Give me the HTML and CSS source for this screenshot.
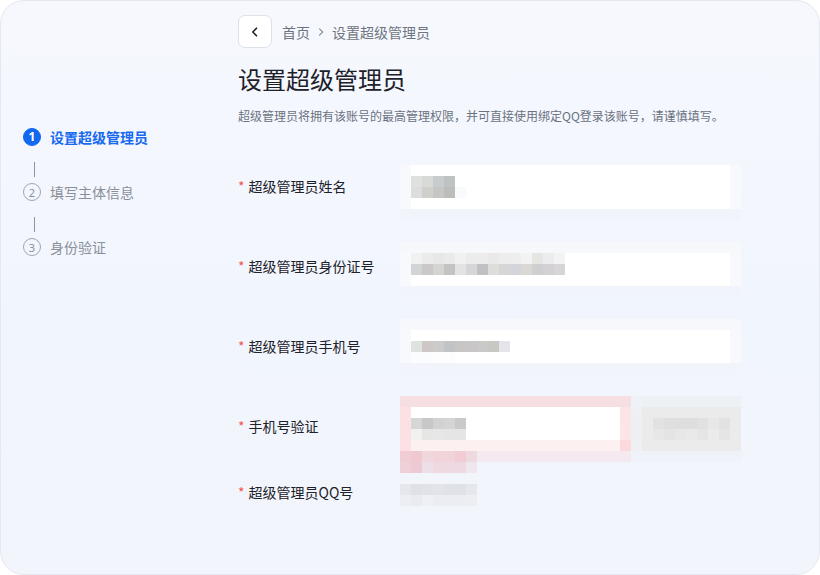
FILE: index.html
```html
<!DOCTYPE html>
<html lang="zh-CN">
<head>
<meta charset="utf-8">
<title>设置超级管理员</title>
<link rel="stylesheet" href="styles.css">
</head>
<body>
<div class="card">
  <aside class="steps">
    <div class="step active"><span class="dot">1</span><span class="step-text">设置超级管理员</span></div>
    <div class="link"></div>
    <div class="step"><span class="dot">2</span><span class="step-text">填写主体信息</span></div>
    <div class="link"></div>
    <div class="step"><span class="dot">3</span><span class="step-text">身份验证</span></div>
  </aside>
  <main class="main">
    <div class="topbar">
      <button class="back" type="button" aria-label="返回">
        <svg width="12" height="12" viewBox="0 0 12 12"><path d="M7.5 2.2 3.8 6l3.7 3.8" fill="none" stroke="#1d2129" stroke-width="1.6" stroke-linecap="round" stroke-linejoin="round"/></svg>
      </button>
      <nav class="crumbs">
        <span>首页</span>
        <svg class="sep" width="10" height="10" viewBox="0 0 10 10"><path d="M3.5 1.8 6.7 5 3.5 8.2" fill="none" stroke="#8a9099" stroke-width="1.2" stroke-linecap="round" stroke-linejoin="round"/></svg>
        <span>设置超级管理员</span>
      </nav>
    </div>
    <h1 class="title">设置超级管理员</h1>
    <p class="desc">超级管理员将拥有该账号的最高管理权限，并可直接使用绑定QQ登录该账号，请谨慎填写。</p>

    <form class="form">
      <!-- row 1 -->
      <div class="row r1">
        <label class="label"><i>*</i>超级管理员姓名</label>
        <div class="field">
          <div class="strip"><b class="c e"></b><b class="fill w"></b><b class="c e"></b></div>
          <div class="strip"><b class="c e"></b><b class="c" style="background:#dfe0df"></b><b class="c" style="background:#d8dad7"></b><b class="c" style="background:#c9cccd"></b><b class="c" style="background:#bfc2c3"></b><b class="fill w"></b><b class="c e"></b></div>
          <div class="strip"><b class="c e"></b><b class="c" style="background:#dddddd"></b><b class="c" style="background:#cfd0cc"></b><b class="c" style="background:#c6c6c4"></b><b class="c" style="background:#bcbcba"></b><b class="c" style="background:#f9fafc"></b><b class="fill w"></b><b class="c e"></b></div>
          <div class="strip"><b class="c e"></b><b class="fill w"></b><b class="c e"></b></div>
          <div class="strip faint"></div>
        </div>
      </div>

      <!-- row 2 -->
      <div class="row r2">
        <label class="label"><i>*</i>超级管理员身份证号</label>
        <div class="field">
          <div class="strip faint2"></div>
          <div class="strip"><b class="c e"></b><b class="c" style="background:#f1f1f1"></b><b class="c" style="background:#ebebeb"></b><b class="c" style="background:#e7e7e7"></b><b class="c" style="background:#e9eaeb"></b><b class="c" style="background:#f1f1f1"></b><b class="c" style="background:#ececec"></b><b class="c" style="background:#ececec"></b><b class="c" style="background:#eae8e8"></b><b class="c" style="background:#eeeded"></b><b class="c" style="background:#eeeeef"></b><b class="c" style="background:#f3f3f3"></b><b class="c" style="background:#e5e5e2"></b><b class="c" style="background:#ececee"></b><b class="c" style="background:#f3f3f3"></b><b class="fill w"></b><b class="c e"></b></div>
          <div class="strip"><b class="c e"></b><b class="c" style="background:#d2d5d6"></b><b class="c" style="background:#cac8c8"></b><b class="c" style="background:#d4d5d0"></b><b class="c" style="background:#c2c4c4"></b><b class="c" style="background:#e3e3e3"></b><b class="c" style="background:#d6d5d7"></b><b class="c" style="background:#c1c1c3"></b><b class="c" style="background:#dedddb"></b><b class="c" style="background:#d6d6d6"></b><b class="c" style="background:#d4d5da"></b><b class="c" style="background:#dad8d5"></b><b class="c" style="background:#cdd0cf"></b><b class="c" style="background:#d3d1d3"></b><b class="c" style="background:#d6d6d6"></b><b class="fill w"></b><b class="c e"></b></div>
          <div class="strip"><b class="c e"></b><b class="fill w"></b><b class="c e"></b></div>
          <div class="strip faint"></div>
        </div>
      </div>

      <!-- row 3 -->
      <div class="row r3">
        <label class="label"><i>*</i>超级管理员手机号</label>
        <div class="field">
          <div class="strip faint2"></div>
          <div class="strip"><b class="c e"></b><b class="fill w"></b><b class="c e"></b></div>
          <div class="strip"><b class="c e"></b><b class="c" style="background:#dfe3e0"></b><b class="c" style="background:#cdc8c5"></b><b class="c" style="background:#cbcbca"></b><b class="c" style="background:#c1c4c6"></b><b class="c" style="background:#c8c6c4"></b><b class="c" style="background:#c8c6c7"></b><b class="c" style="background:#c9c9ca"></b><b class="c" style="background:#c8c7c1"></b><b class="c" style="background:#e4e4ea"></b><b class="fill w"></b><b class="c e"></b></div>
          <div class="strip"><b class="c e"></b><b class="c" style="background:#fbfcfd"></b><b class="c" style="background:#fbfcfd"></b><b class="c" style="background:#fdfdfe"></b><b class="c" style="background:#fdfdfe"></b><b class="fill w"></b><b class="c e"></b></div>
          <div class="strip faint"></div>
        </div>
      </div>

      <!-- row 4 -->
      <div class="row r4">
        <label class="label"><i>*</i>手机号验证</label>
        <div class="field">
          <div class="strip"><b class="pk-w" style="background:#f5dfe3"></b><b class="c" style="background:#eef1f6"></b><b class="fill" style="background:#edf0f4"></b></div>
          <div class="strip"><b class="c" style="background:#fbe1e4"></b><b class="in w"></b><b class="c" style="background:#fce4e6"></b><b class="c" style="background:#eef0f4"></b><b class="fill btn"></b></div>
          <div class="strip"><b class="c" style="background:#fce0e3"></b><b class="c" style="background:#d6d6d6"></b><b class="c" style="background:#c9c8c9"></b><b class="c" style="background:#d2d2d2"></b><b class="c" style="background:#d4d5d6"></b><b class="c" style="background:#cacaca"></b><b class="in2 w"></b><b class="c" style="background:#fce4e7"></b><b class="c" style="background:#eeeff2"></b><b class="c btn"></b><b class="c" style="background:#e2e2e2"></b><b class="c" style="background:#dfdfdf"></b><b class="c" style="background:#dedede"></b><b class="c" style="background:#dedede"></b><b class="c" style="background:#e1e1e1"></b><b class="c" style="background:#e7e7e7"></b><b class="c" style="background:#e2e2e2"></b><b class="fill btn"></b></div>
          <div class="strip"><b class="c" style="background:#fce1e4"></b><b class="c" style="background:#f1f1f0"></b><b class="c" style="background:#e6e6e4"></b><b class="c" style="background:#e7e7e7"></b><b class="c" style="background:#e5e5e5"></b><b class="c" style="background:#e5e5e5"></b><b class="in2 w"></b><b class="c" style="background:#fce4e7"></b><b class="c" style="background:#eeeff2"></b><b class="c btn"></b><b class="c" style="background:#e7e7e7"></b><b class="c" style="background:#e4e4e4"></b><b class="c" style="background:#e7e7e7"></b><b class="c" style="background:#e9e9e9"></b><b class="c" style="background:#e5e5e5"></b><b class="c" style="background:#ebebeb"></b><b class="c" style="background:#e5e5e5"></b><b class="fill btn"></b></div>
          <div class="strip"><b class="c" style="background:#fce0e4"></b><b class="in" style="background:#fdf0f1"></b><b class="c" style="background:#fadadd"></b><b class="c" style="background:#eef0f4"></b><b class="fill btn"></b></div>
          <div class="strip"><b class="c" style="background:#f0cdd4"></b><b class="c" style="background:#efc8d0"></b><b class="c" style="background:#f1d6de"></b><b class="c" style="background:#f2d3da"></b><b class="c" style="background:#f1d3db"></b><b class="c" style="background:#f2ccd4"></b><b class="c" style="background:#efd9e0"></b><b class="tail" style="background:#f5e9f0"></b><b class="fill" style="background:#eff2f8"></b></div>
          <div class="strip"><b class="c" style="background:#efd0d8"></b><b class="c" style="background:#edcad3"></b><b class="c" style="background:#ecdfe8"></b><b class="c" style="background:#efd8e0"></b><b class="c" style="background:#efd8e0"></b><b class="c" style="background:#eed9e2"></b><b class="c" style="background:#f0e7ee"></b></div>
        </div>
      </div>

      <!-- row 5 -->
      <div class="row r5">
        <label class="label"><i>*</i>超级管理员QQ号</label>
        <div class="field">
          <div class="strip"><b class="c" style="background:#e5e7ec"></b><b class="c" style="background:#dfe1e7"></b><b class="c" style="background:#e0e2e8"></b><b class="c" style="background:#e3e4ea"></b><b class="c" style="background:#e0e2e8"></b><b class="c" style="background:#dee1e8"></b><b class="c" style="background:#e5e7ec"></b></div>
          <div class="strip"><b class="c" style="background:#eceef3"></b><b class="c" style="background:#e9ebf1"></b><b class="c" style="background:#eef0f5"></b><b class="c" style="background:#ebedf2"></b><b class="c" style="background:#ebedf2"></b><b class="c" style="background:#ebedf2"></b><b class="c" style="background:#eceef2"></b></div>
        </div>
      </div>
    </form>
  </main>
</div>
</body>
</html>
```

FILE: styles.css
```css
* { box-sizing: border-box; }

html, body {
  margin: 0;
  padding: 0;
  background: #ffffff;
}

body {
  width: 820px;
  height: 575px;
  font-family: "Noto Sans CJK SC", "Noto Sans", "Liberation Sans", sans-serif;
  color: #1d2129;
}

.card {
  width: 820px;
  height: 575px;
  border: 1px solid #e4e8ef;
  border-radius: 24px;
  background: linear-gradient(180deg, #f6f8fe 0%, #f1f5fd 55%, #f2f5fb 100%);
  display: flex;
  overflow: hidden;
}

/* ---------- steps ---------- */
.steps {
  width: 237px;
  flex: none;
  padding: 126px 0 0 22px;
  display: flex;
  flex-direction: column;
}

.step {
  height: 20px;
  display: flex;
  align-items: center;
  gap: 9px;
  font-size: 14px;
  color: #8a8f99;
}

.dot {
  width: 18px;
  height: 18px;
  border-radius: 50%;
  border: 1px solid #a1a6ae;
  display: flex;
  align-items: center;
  justify-content: center;
  font-size: 11px;
  line-height: 1;
  color: #8a8f99;
  font-family: "Noto Sans", "Liberation Sans", sans-serif;
}

.step.active {
  color: #1769ee;
  font-weight: 700;
}

.step.active .dot {
  background: #1269ef;
  border-color: #1269ef;
  color: #ffffff;
  font-weight: 700;
  font-size: 12px;
}

.link {
  width: 1px;
  height: 15px;
  margin: 15px 0 5px 11px;
  background: #8f949b;
}

/* ---------- main ---------- */
.main {
  flex: 1;
  padding-top: 14px;
}

.topbar {
  display: flex;
  align-items: center;
  gap: 10px;
}

.back {
  width: 34px;
  height: 33px;
  padding: 0;
  border: 1px solid #dde1e8;
  border-radius: 7px;
  background: #ffffff;
  display: flex;
  align-items: center;
  justify-content: center;
}

.crumbs {
  display: flex;
  align-items: center;
  gap: 4px;
  font-size: 14px;
  color: #6e7580;
}

.crumbs .sep { margin: 0 2px; }

.title {
  margin: 15px 0 0;
  font-size: 24px;
  line-height: 32px;
  font-weight: 400;
  color: #1d2129;
}

.desc {
  margin: 12px 0 0;
  font-size: 12px;
  line-height: 18px;
  color: #6b7280;
}

/* ---------- form ---------- */
.form {
  margin-top: 40px;
  display: flex;
  flex-direction: column;
}

.row {
  display: flex;
  align-items: flex-start;
}

.r1, .r2, .r3 { margin-bottom: 22px; }
.r4 { margin-bottom: 11px; }

.label {
  width: 162px;
  flex: none;
  font-size: 14px;
  line-height: 20px;
  color: #1d2129;
}

.label i {
  font-style: normal;
  color: #f2564d;
  margin-right: 4px;
}

.r1 .label { padding-top: 11px; }
.r2 .label { padding-top: 14px; }
.r3 .label { padding-top: 17px; }
.r4 .label { padding-top: 20px; }
.r5 .label { margin-top: -2px; }

.field {
  width: 341px;
  display: flex;
  flex-direction: column;
}

.strip {
  height: 11px;
  display: flex;
}

.strip b { display: block; height: 11px; }

.c { width: 11px; flex: none; }
.fill { flex: 1; }
.w { background: #ffffff; }
.e { background: #f7f9fd; }
.faint { background: #f1f4fb; }
.faint2 { background: #f6f8fc; }
.btn { background: #ebebeb; }

.pk-w { width: 231px; flex: none; }
.in { width: 209px; flex: none; }
.in2 { width: 154px; flex: none; }
.tail { width: 154px; flex: none; }
```
